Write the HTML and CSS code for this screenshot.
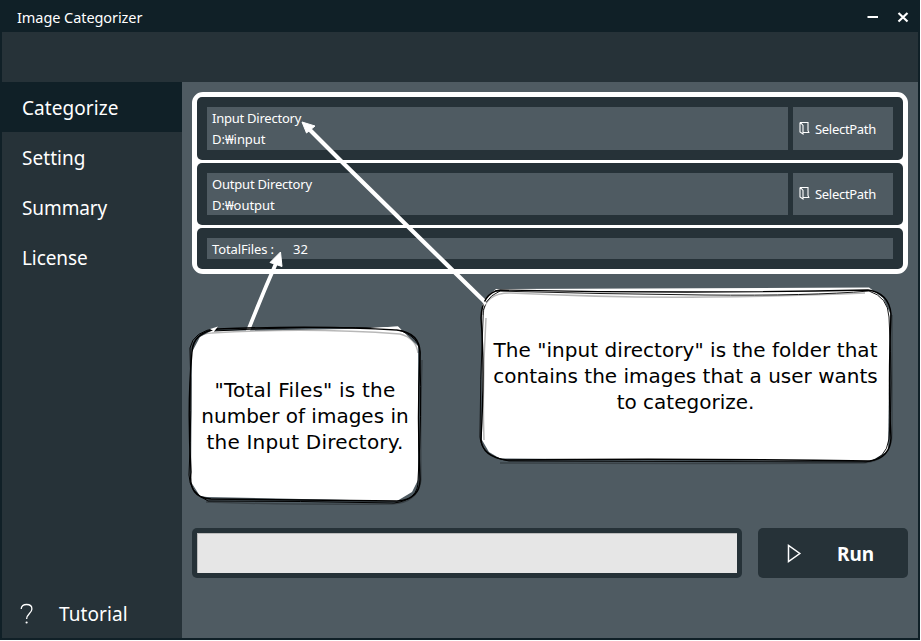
FILE: index.html
```html
<!DOCTYPE html>
<html lang="en">
<head>
<meta charset="utf-8">
<title>Image Categorizer</title>
<link rel="stylesheet" href="styles.css">
</head>
<body>
<div class="window">
  <header class="titlebar">
    <span class="title">Image Categorizer</span>
    <svg class="controls" width="50" height="32" viewBox="0 0 50 32"><path d="M7.500 17h10.500M38.500 13l9 8.500M47.500 13l-9 8.500" fill="none" stroke="#fff" stroke-width="2.2"/></svg>
  </header>
  <div class="banner"></div>
  <div class="body">
    <nav class="sidebar">
      <a class="item active">Categorize</a>
      <a class="item setting">Setting</a>
      <a class="item summary">Summary</a>
      <a class="item license">License</a>
      <a class="item tutorial">
        <svg width="14" height="22" viewBox="0 0 14 22"><path d="M1.200 6C1.200 2.800 3.500 1.500 6.600 1.500c3.200 0 5.300 1.600 5.300 4.400 0 4.400-5.300 4.800-5.300 10.100" fill="none" stroke="#fff" stroke-width="1.3"/><circle cx="6.600" cy="19.500" r="1.100" fill="#fff"/></svg>
        <span>Tutorial</span>
      </a>
    </nav>
    <main class="main">
      <section class="group">
        <div class="panel">
          <div class="field"><span class="in-dir">Input Directory</span><span class="in-path">D:₩input</span></div>
          <div class="select">
            <svg width="12" height="14" viewBox="0 0 12 14"><path d="M2 1.500h8v8l.8 2H5M2 1.500v9.500L5 13V4.500L2.500 1.500" fill="none" stroke="#fff" stroke-width="1.100"/></svg>
            <span>SelectPath</span>
          </div>
        </div>
        <div class="panel">
          <div class="field"><span class="out-dir">Output Directory</span><span class="out-path">D:₩output</span></div>
          <div class="select second">
            <svg width="12" height="14" viewBox="0 0 12 14"><path d="M2 1.500h8v8l.8 2H5M2 1.500v9.500L5 13V4.500L2.500 1.500" fill="none" stroke="#fff" stroke-width="1.100"/></svg>
            <span>SelectPath</span>
          </div>
        </div>
        <div class="panel total">
          <div class="field count"><span class="total-label">TotalFiles :</span><span>32</span></div>
        </div>
      </section>
      <footer class="actions">
        <div class="progress"><div class="track"></div></div>
        <div class="run">
          <svg width="15" height="19" viewBox="0 0 15 19"><path d="M1.500 1.500v16l11.300-8z" fill="none" stroke="#fff" stroke-width="1.5"/></svg>
          <span>Run</span>
        </div>
      </footer>
    </main>
  </div>
  <svg class="sketch" width="921" height="641" viewBox="0 0 921 641">
    <g fill="#fff" stroke="#fff" stroke-linejoin="round">
      <path d="M302 122L315 126L306.500 133Z"/>
      <path d="M309 129L340 160L486 303" fill="none" stroke-width="4.200"/>
      <path d="M280.500 252L282 266.500L270 262.500Z"/>
      <path d="M247.500 332Q262 295 277 261" fill="none" stroke-width="3.800"/>
    </g>
    <g fill="#fff" stroke="none">
      <path d="M496 289L869 287.500L883 298L890 313L888 451L871 461L500 458.500L489 452L482 440L482 305L489 295Z"/>
      <path d="M192 352L200 337L218 327L214 331L345 329L398 326.500L418 346L418 480L412 492L397 501L207 497L200 496L191 482Z"/>
    </g>
    <g fill="none" stroke="#000">
      <path stroke-width="1.400" d="M500 290Q690 294 868 290Q889 293 891 314Q888 385 891 438Q890 458 870 461Q680 458 507 460Q482 457 481 439Q485 370 481 318Q482 293 500 290"/>
      <path stroke-width=".9" d="M495 291Q600 294 705 295T869 291Q888 297 889 317Q893 388 889 439Q886 460 866 462L509 461Q481 456 480 437Q480 380 483 320Q481 299 500 291"/>
      <path stroke-width="1.500" opacity=".28" d="M483 315Q484 293 510 293Q615 298 707 297T865 293M486 318Q482 380 484 440M500 463Q680 464 864 463Q892 460 892 433V315"/>
      <path stroke-width="1.400" d="M218 329Q320 325 397 330Q420 333 420 353Q417 420 420 478Q421 499 397 501Q300 500 211 499Q188 498 191 472Q187 405 192 352Q193 332 218 329"/>
      <path stroke-width="1" d="M214 331Q320 325 395 329Q422 336 420 357Q422 415 418 480Q419 500 394 503Q300 501 208 501Q189 492 189 475Q192 410 190 348Q193 331 218 328"/>
      <path stroke-width="1.500" opacity=".28" d="M192 350Q194 333 212 333Q308 327 400 334Q416 338 418 353M422 360Q420 420 421 480Q418 503 392 504Q288 505 206 502"/>
    </g>
    <path d="M210 329L218 326.500L214 331.500ZM370 328L398 326.500L401 329.500ZM482 300L487 303L484 306Z" fill="#fff"/>
  </svg>
  <div class="callout files"><span class="wide">"Total Files" is the</span><span>number of images in</span><span class="wide">the Input Directory.</span></div>
  <div class="callout input"><span class="slight">The "input directory" is the folder that</span><span>contains the images that a user wants</span><span>to categorize.</span></div>
</div>
</body>
</html>
```
FILE: styles.css
```css
* { box-sizing: border-box; }
body { margin: 0; background: #fff; overflow: hidden; }
.window {
  position: relative; width: 920px; height: 640px; padding: 0 2px 2px;
  background: #102027; color: #fff;
  font-family: "Noto Sans", "Noto Sans CJK KR", sans-serif;
  display: flex; flex-direction: column;
}
span { white-space: nowrap; }
.titlebar { height: 32px; display: flex; justify-content: space-between; align-items: center; padding: 1px 8px 0 15px; font-size: 14.5px; letter-spacing: -.07px; }
.controls { margin-top: -1px; }
.banner { height: 50px; background: #263238; }
.body { flex: 1; display: flex; }
.sidebar { width: 180px; background: #263238; display: flex; flex-direction: column; }
.item { height: 50px; padding: 1px 0 0 20px; font-size: 19px; line-height: 50px; display: block; letter-spacing: .05px; }
.active { background: #102027; letter-spacing: .06px; }
.summary { letter-spacing: -.1px; }
.license { letter-spacing: -.1px; }
.tutorial { margin-top: auto; margin-bottom: -1px; display: flex; align-items: center; padding: 0 0 0 18px; gap: 25px; letter-spacing: .1px; }
.main { flex: 1; background: #4f5b62; padding: 10px; display: flex; flex-direction: column; justify-content: space-between; }
.group { width: 716px; height: 182px; border: 5px solid #fff; border-radius: 11px; background: #fff; display: flex; flex-direction: column; justify-content: space-between; }
.panel { height: 62.5px; border-radius: 5px; background: #263238; padding: 10px; display: flex; gap: 5px; font-size: 13px; }
.total { height: 41px; }
.field { flex: 1; background: #4f5b62; padding: 1px 5px; display: flex; flex-direction: column; line-height: 21px; }
.in-dir { letter-spacing: -.24px; }
.out-dir { letter-spacing: -.2px; }
.in-path, .out-path { letter-spacing: -.04px; }
.total-label { letter-spacing: -.12px; }
.count { flex-direction: row; gap: 19px; }
.select { width: 100px; background: #4f5b62; display: flex; align-items: center; padding-left: 5px; gap: 5px; padding-top: 2px; letter-spacing: -.3px; }
.select svg { margin-top: -2px; }
.second { padding-top: 1px; }
.actions { display: flex; justify-content: space-between; width: 716px; margin-bottom: 50px; }
.progress { width: 550px; height: 50px; border-radius: 5px; padding: 5px; background: #263238; }
.track { height: 40px; background: #e6e6e6; border: 1px solid #bcbcbc; border-right: 0; border-bottom: 0; }
.run { width: 150px; height: 50px; border-radius: 5px; background: #263238; display: flex; align-items: center; padding: 1px 0 0 29px; gap: 35px; font-size: 19px; font-weight: 700; }
.run svg { margin-top: -1px; }
.sketch { position: absolute; left: 0; top: 0; }
.callout { position: absolute; display: flex; flex-direction: column; align-items: center; justify-content: center; color: #000; font: 20px/26px "DejaVu Sans", sans-serif; }
.wide { letter-spacing: .2px; }
.slight { letter-spacing: .05px; }
.files { left: 190px; top: 330px; width: 230px; height: 172px; }
.input { left: 481px; top: 290px; width: 409px; height: 172px; }
```
